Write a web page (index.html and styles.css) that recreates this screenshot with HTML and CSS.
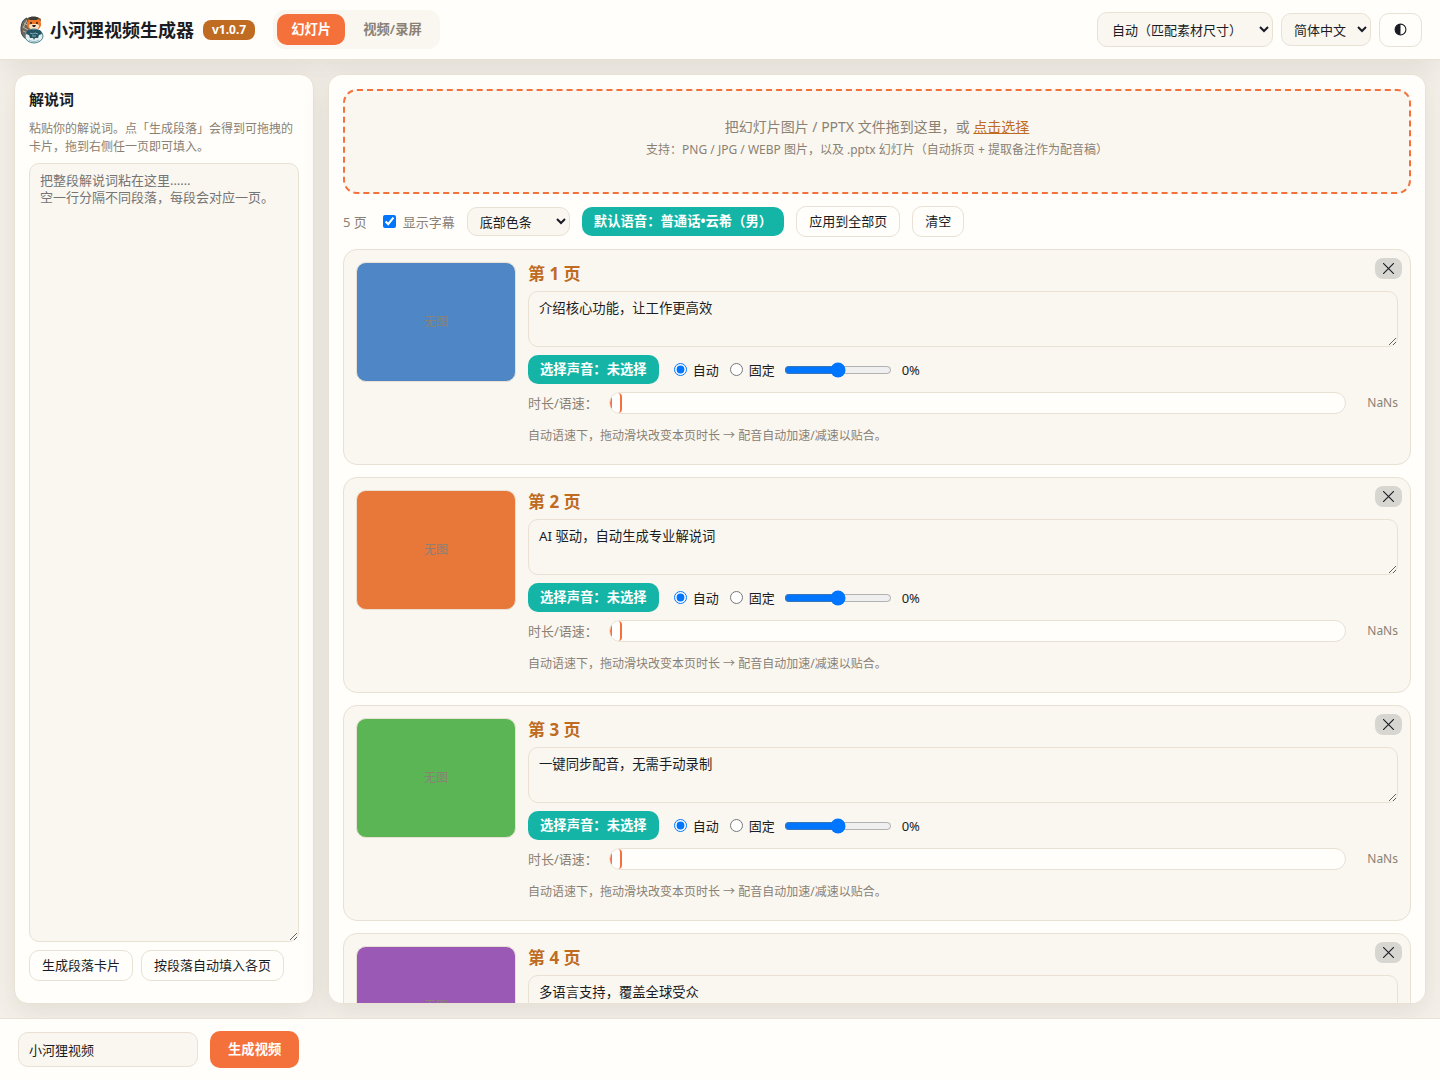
FILE: index.html
```html
<!DOCTYPE html>
<html lang="zh-CN">
<head>
    <meta charset="UTF-8">
    <meta name="viewport" content="width=device-width, initial-scale=1.0">
    <title>小河狸视频生成器</title>
    <link rel="stylesheet" href="styles.css">
</head>
<body>
    <header class="topbar">
        <div class="brand">
            <svg class="logo" viewBox="0 0 28 28" aria-hidden="true">
                <path d="M9 2C5 3 3 8 3 13c0 5 2 9 6 10l4-8z" fill="#6f665c" stroke="#31444c" stroke-width="1"/>
                <path d="M6 7l5 3M5 11l5 3M5 15l5 2M9 4l-4 8" stroke="#b9b2a5" stroke-width="1"/>
                <circle cx="11" cy="4" r="2" fill="#8a4b22"/>
                <circle cx="21" cy="4" r="2" fill="#8a4b22"/>
                <path d="M9 8c0-4 3-6 7-6s7 2 7 6c0 4-3 6-7 6s-7-2-7-6z" fill="#ee7624"/>
                <path d="M10 2c2-2 9-2 11 0l-2 2h-7z" fill="#3b3b38"/>
                <path d="M11 10c0-2 2-2 5-2s5 0 5 2-2 4-5 4-5-2-5-4z" fill="#f6e3c8"/>
                <circle cx="13" cy="7" r="1" fill="#26211d"/>
                <circle cx="19" cy="7" r="1" fill="#26211d"/>
                <path d="M14 9h4l-1 2h-2z" fill="#3a221b"/>
                <ellipse cx="16" cy="20" rx="9" ry="7" fill="#e5eeee" stroke="#4c7f8b" stroke-width="1"/>
                <path d="M9 15c3-2 11-2 14 0l1 3-3 1-1 3h-3l-1 2-1-2h-3l-1-3-3-1z" fill="#245361"/>
                <path d="M12 17l3 1 2-1 3 1M14 20h4" fill="none" stroke="#7fb1b7" stroke-width="1"/>
                <path d="M11 24c3 2 7 2 10 0" fill="none" stroke="#88b9c2" stroke-width="1"/>
            </svg>
            <h1>小河狸视频生成器</h1>
            <span class="version">v1.0.7</span>
        </div>
        <nav class="tabs">
            <button type="button" class="tab active">幻灯片</button>
            <button type="button" class="tab">视频/录屏</button>
        </nav>
        <div class="top-actions">
            <select class="size-select" aria-label="画面尺寸">
                <option>自动（匹配素材尺寸）</option>
            </select>
            <select class="lang-select" aria-label="语言">
                <option>简体中文</option>
            </select>
            <button type="button" class="theme-btn" aria-label="切换主题">
                <svg viewBox="0 0 12 12" aria-hidden="true">
                    <circle cx="6" cy="6" r="5" fill="none" stroke="currentColor"/>
                    <path d="M6 1a5 5 0 0 0 0 10z" fill="currentColor"/>
                </svg>
            </button>
        </div>
    </header>

    <main class="layout">
        <aside class="panel script-panel">
            <h2>解说词</h2>
            <p class="hint">粘贴你的解说词。点「生成段落」会得到可拖拽的卡片，拖到右侧任一页即可填入。</p>
            <textarea class="script-input" aria-label="解说词" placeholder="把整段解说词粘在这里……&#10;空一行分隔不同段落，每段会对应一页。"></textarea>
            <div class="script-actions">
                <button type="button" class="btn">生成段落卡片</button>
                <button type="button" class="btn">按段落自动填入各页</button>
            </div>
        </aside>

        <section class="panel slides-panel">
            <div class="dropzone">
                <p class="drop-title">把幻灯片图片 / PPTX 文件拖到这里，或 <a href="#">点击选择</a></p>
                <p class="drop-note">支持：PNG / JPG / WEBP 图片，以及 .pptx 幻灯片（自动拆页 + 提取备注作为配音稿）</p>
            </div>

            <div class="toolbar">
                <span class="count">5 页</span>
                <label class="check"><input type="checkbox" checked> 显示字幕</label>
                <select class="caption-select" aria-label="字幕样式">
                    <option>底部色条</option>
                </select>
                <button type="button" class="voice">默认语音：普通话•云希（男）</button>
                <button type="button" class="btn">应用到全部页</button>
                <button type="button" class="btn">清空</button>
            </div>

            <div class="slides" id="slides"></div>
        </section>
    </main>

    <footer class="bottombar">
        <input type="text" class="name-input" value="小河狸视频" aria-label="文件名">
        <button type="button" class="btn-primary">生成视频</button>
    </footer>

    <script src="script.js"></script>
</body>
</html>
```
FILE: styles.css
```css
* {
    box-sizing: border-box;
}
body {
    margin: 0;
    height: 100vh;
    display: flex;
    flex-direction: column;
    overflow: hidden;
    background-color: #f5f1ea;
    color: #1a1c24;
    font-family: "Noto Sans", "Noto Sans CJK SC", sans-serif;
    font-size: 13px;
    line-height: 18px;
}
h1, h2, h3, p {
    margin: 0;
}
button, input, select, textarea {
    font-family: inherit;
    color: inherit;
}
select, .btn, .script-input, .name-input {
    font-size: 13px;
}
button {
    line-height: 17px;
    cursor: pointer;
}
select, textarea, .name-input {
    background-color: #faf7f1;
    border: 1px solid #e8e1d4;
    border-radius: 10px;
}

/* Barra superior */
.topbar {
    display: flex;
    align-items: center;
    height: 60px;
    padding: 0 18px;
    background-color: #fffefa;
    border-bottom: 1px solid #e8e1d4;
    box-shadow: 0 8px 28px rgba(60, 50, 30, 0.1);
}
.brand {
    display: flex;
    align-items: center;
    gap: 4px;
}
.logo {
    width: 28px;
    height: 28px;
}
.brand h1 {
    font-size: 18px;
    line-height: 24px;
}
.version {
    margin-left: 5px;
    padding: 1px 9px;
    border-radius: 8px;
    background-color: #bf6b22;
    color: #fff;
    font-size: 12px;
    font-weight: 700;
}
.tabs {
    display: flex;
    gap: 4px;
    margin-left: 18px;
    padding: 4px;
    border-radius: 12px;
    background-color: #faf7f1;
}
.tab {
    padding: 7px 14px;
    border: none;
    border-radius: 10px;
    background: none;
    color: #8a8174;
    font-weight: 600;
}
.tab.active {
    background-color: #f5713c;
    color: #fff;
    font-weight: 700;
}
.top-actions {
    display: flex;
    align-items: center;
    gap: 8px;
    margin-left: auto;
}
.size-select {
    width: 176px;
    height: 35px;
    padding: 0 10px;
}
.lang-select {
    width: 90px;
    height: 33px;
    padding: 0 8px;
}
.theme-btn {
    display: flex;
    align-items: center;
    justify-content: center;
    width: 43px;
    height: 34px;
    border: 1px solid #e8e1d4;
    border-radius: 10px;
    background-color: #fffefa;
}
.theme-btn svg {
    width: 13px;
    height: 13px;
}

.layout {
    flex: 1;
    min-height: 0;
    display: grid;
    grid-template-columns: 300px minmax(0, 1fr);
    gap: 14px;
    padding: 14px;
}
.panel {
    min-height: 0;
    padding: 14px;
    border: 1px solid #e8e1d4;
    border-radius: 14px;
    background-color: #fffefa;
    box-shadow: 0 8px 28px rgba(60, 50, 30, 0.1);
}

.script-panel {
    display: flex;
    flex-direction: column;
}
.script-panel h2 {
    font-size: 15px;
    line-height: 20px;
}
.hint {
    color: #8a8174;
    font-size: 12px;
}
.script-panel .hint {
    margin: 11px 0 7px;
}
textarea {
    display: block;
    width: 100%;
    padding: 8px 10px;
    line-height: 17px;
    resize: vertical;
}
.script-input {
    flex: 1;
}
.script-actions {
    display: flex;
    gap: 8px;
    margin: 8px 0;
}
.btn {
    padding: 6px 12px;
    border: 1px solid #e8e1d4;
    border-radius: 10px;
    background-color: #fffefa;
}
.voice {
    padding: 6px 12px;
    border: none;
    border-radius: 10px;
    background-color: #14b5a6;
    color: #fff;
    font-weight: 700;
}

.slides-panel {
    overflow-y: auto;
    scrollbar-width: none;
}
.dropzone {
    padding: 25px 26px 26px;
    border: 2px dashed #f5713c;
    border-radius: 14px;
    background-color: #faf7f1;
    color: #8a8174;
    text-align: center;
}
.drop-title {
    font-size: 14px;
    line-height: 22px;
}
.drop-title a {
    color: #bf6b22;
}
.drop-note {
    padding-bottom: 5px;
    font-size: 12px;
    line-height: 23px;
}
.toolbar {
    display: flex;
    align-items: center;
    gap: 12px;
    margin: 12px 0;
}
.count, .check {
    color: #8a8174;
}
.check {
    display: flex;
    align-items: center;
    gap: 7px;
}
.check input {
    margin: 0 0 0 4px;
}
.caption-select {
    width: 103px;
    height: 29px;
    padding: 0 8px;
}

.slides {
    display: flex;
    flex-direction: column;
    gap: 12px;
}
.slide {
    position: relative;
    display: flex;
    align-items: flex-start;
    gap: 12px;
    padding: 12px;
    border: 1px solid #e8e1d4;
    border-radius: 14px;
    background-color: #faf7f1;
}
.thumb {
    display: flex;
    align-items: center;
    justify-content: center;
    width: 160px;
    height: 120px;
    border: 1px solid #e8e1d4;
    border-radius: 10px;
    color: #8a8174;
    font-size: 12px;
    line-height: 20px;
}
.thumb.blue {
    background-color: #4f87c6;
}
.thumb.orange {
    background-color: #e8773a;
}
.thumb.green {
    background-color: #5cb554;
}
.thumb.purple {
    background-color: #9a59b5;
}
.thumb.red {
    background-color: #d9534f;
}
.slide-body {
    flex: 1;
    min-width: 0;
}
.slide-body h3 {
    margin-bottom: 6px;
    color: #bf6b22;
    font-size: 17px;
    line-height: 23px;
}
.slide-body textarea {
    height: 56px;
}
.voice-row {
    display: flex;
    align-items: center;
    margin: 8px 0;
}
.radio {
    display: flex;
    align-items: center;
    gap: 6px;
    margin-left: 11px;
}
.radio input {
    margin: 0;
}
.voice + .radio {
    margin-left: 15px;
}
.rate {
    width: 108px;
    height: 16px;
    margin: 0 10px 0 9px;
}
.time-row {
    display: flex;
    align-items: center;
    color: #8a8174;
}
.time-label {
    width: 81px;
}
.track {
    flex: 1;
    height: 22px;
    overflow: hidden;
    border: 1px solid #e8e1d4;
    border-radius: 11px;
    background-color: #fffefa;
}
.handle {
    width: 12px;
    height: 100%;
    border: 2px solid #f5713c;
    border-width: 0 2px;
    border-radius: 4px;
    background-color: #fff;
}
.duration {
    width: 52px;
    font-size: 12px;
    text-align: right;
}
.slide-body .hint {
    padding: 13px 0 7px;
}
.remove {
    position: absolute;
    top: 8px;
    right: 8px;
    display: flex;
    align-items: center;
    justify-content: center;
    width: 27px;
    height: 21px;
    padding: 0;
    border: none;
    border-radius: 8px;
    background-color: #d8d6d0;
}
.remove svg {
    width: 11px;
    height: 11px;
}

.bottombar {
    display: flex;
    align-items: center;
    gap: 12px;
    padding: 12px 18px;
    border-top: 1px solid #e8e1d4;
    background-color: #fffefa;
}
.name-input {
    width: 180px;
    height: 35px;
    padding: 0 10px;
}
.btn-primary {
    padding: 10px 18px;
    border: none;
    border-radius: 10px;
    background-color: #f5713c;
    color: #fff;
    font-weight: 700;
}
```
FILE: script.js
```js
const slides = [
    { color: "blue", text: "介绍核心功能，让工作更高效" },
    { color: "orange", text: "AI 驱动，自动生成专业解说词" },
    { color: "green", text: "一键同步配音，无需手动录制" },
    { color: "purple", text: "多语言支持，覆盖全球受众" },
    { color: "red", text: "" }
];

document.getElementById("slides").innerHTML = slides.map((slide, i) => `
    <article class="slide">
        <div class="thumb ${slide.color}">无图</div>
        <div class="slide-body">
            <h3>第 ${i + 1} 页</h3>
            <textarea aria-label="第 ${i + 1} 页解说词">${slide.text}</textarea>
            <div class="voice-row">
                <button type="button" class="voice">选择声音：未选择</button>
                <label class="radio"><input type="radio" name="mode${i}" checked> 自动</label>
                <label class="radio"><input type="radio" name="mode${i}"> 固定</label>
                <input type="range" class="rate" min="-50" max="50" value="0" aria-label="语速">
                <span>0%</span>
            </div>
            <div class="time-row">
                <span class="time-label">时长/语速：</span>
                <div class="track"><div class="handle"></div></div>
                <span class="duration">NaNs</span>
            </div>
            <p class="hint">自动语速下，拖动滑块改变本页时长 → 配音自动加速/减速以贴合。</p>
        </div>
        <button type="button" class="remove" aria-label="删除">
            <svg viewBox="0 0 10 10"><path d="M0 0l10 10M10 0L0 10" stroke="currentColor"/></svg>
        </button>
    </article>
`).join("");
```
